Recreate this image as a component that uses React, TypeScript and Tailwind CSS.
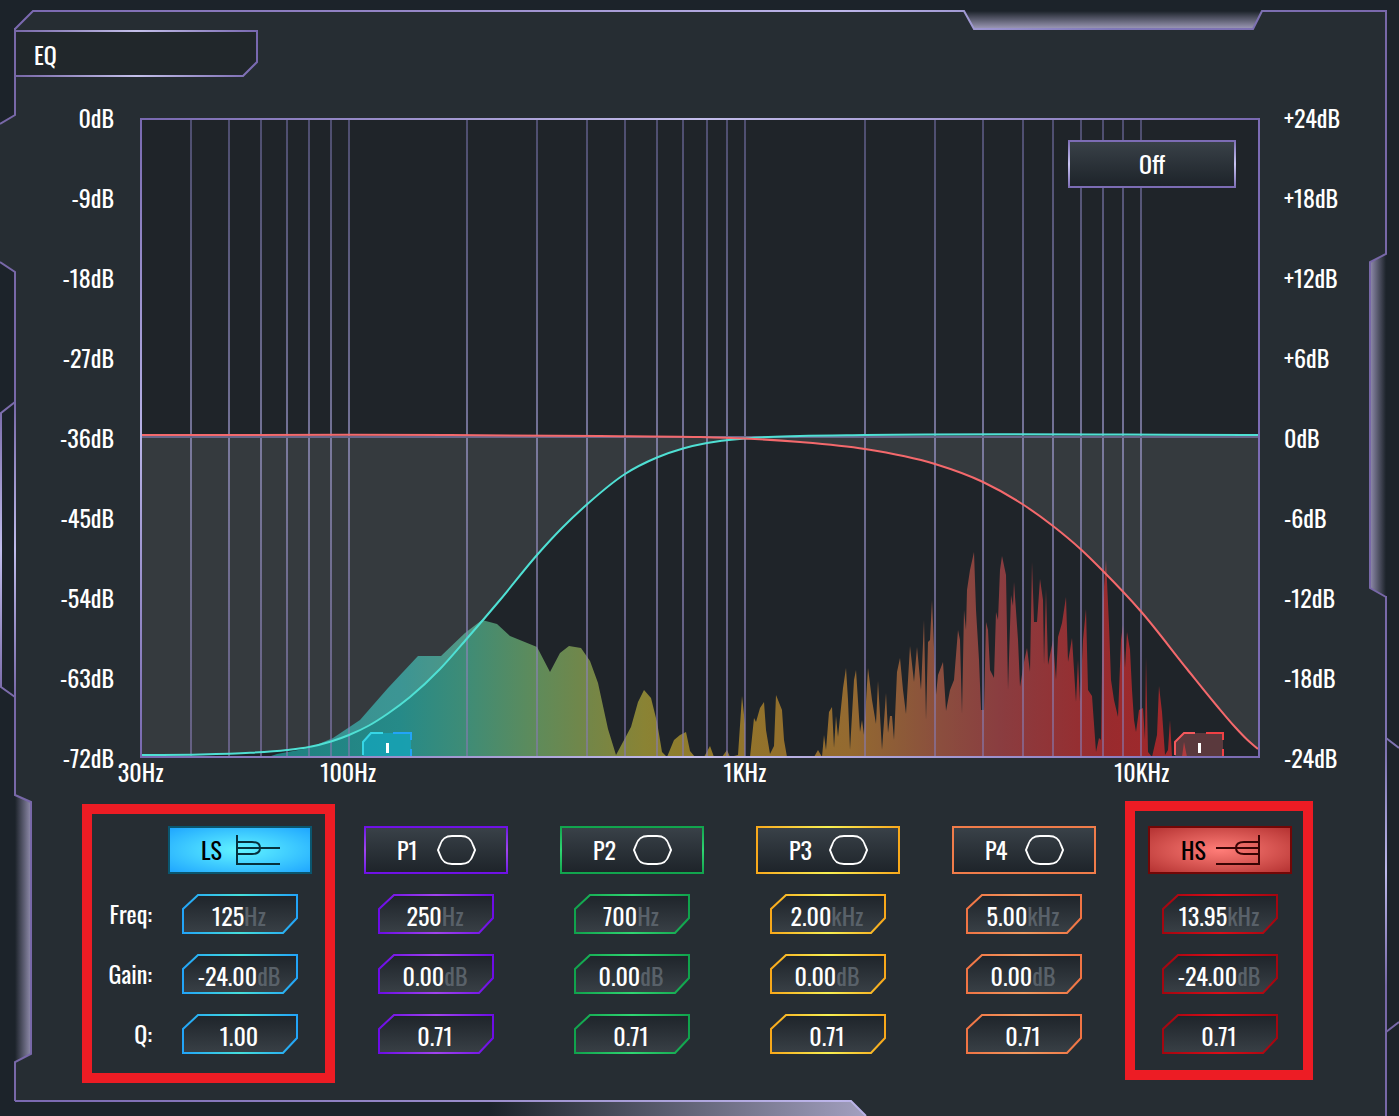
import { useState } from 'react'

type Point = [number, number]

interface Band {
  id: string
  shape: 'low' | 'bell' | 'high'
  freq: string
  unit: string
  gain: string
  q: string
  edge: string
  glow: string
  frame: string
  face: string
}

const IDLE_FACE = 'bg-linear-to-b from-[#394148] to-[#1e242a] text-white'

const BANDS: Band[] = [
  {
    id: 'LS', shape: 'low', freq: '125', unit: 'Hz', gain: '-24.00', q: '1.00',
    edge: '#22a4f8', glow: '#45dfdc',
    frame: 'bg-[#0a566f]',
    face: 'bg-radial from-[#62f4ff] to-[#1fa6ff] text-black',
  },
  {
    id: 'P1', shape: 'bell', freq: '250', unit: 'Hz', gain: '0.00', q: '0.71',
    edge: '#6d0ce6', glow: '#a044ee',
    frame: 'bg-linear-to-b from-[#6d0ce6] via-[#a044ee] to-[#6d0ce6]',
    face: IDLE_FACE,
  },
  {
    id: 'P2', shape: 'bell', freq: '700', unit: 'Hz', gain: '0.00', q: '0.71',
    edge: '#10a24c', glow: '#2fd672',
    frame: 'bg-linear-to-b from-[#10a24c] via-[#2fd672] to-[#10a24c]',
    face: IDLE_FACE,
  },
  {
    id: 'P3', shape: 'bell', freq: '2.00', unit: 'kHz', gain: '0.00', q: '0.71',
    edge: '#f8a81a', glow: '#f8f052',
    frame: 'bg-linear-to-r from-[#f8a81a] via-[#f8f052] to-[#f8a81a]',
    face: IDLE_FACE,
  },
  {
    id: 'P4', shape: 'bell', freq: '5.00', unit: 'kHz', gain: '0.00', q: '0.71',
    edge: '#f07444', glow: '#f39a60',
    frame: 'bg-[#f07c4a]',
    face: IDLE_FACE,
  },
  {
    id: 'HS', shape: 'high', freq: '13.95', unit: 'kHz', gain: '-24.00', q: '0.71',
    edge: '#a30610', glow: '#dc0c18',
    frame: 'bg-[#720606]',
    face: 'bg-radial from-[#ff7d78] to-[#b53232] text-black',
  },
]

const LEFT_SCALE = ['0dB', '-9dB', '-18dB', '-27dB', '-36dB', '-45dB', '-54dB', '-63dB', '-72dB']
const RIGHT_SCALE = ['+24dB', '+18dB', '+12dB', '+6dB', '0dB', '-6dB', '-12dB', '-18dB', '-24dB']

const FREQ_LABELS = [
  { hz: 30, text: '30Hz' },
  { hz: 100, text: '100Hz' },
  { hz: 1000, text: '1KHz' },
  { hz: 10000, text: '10KHz' },
]

const GRID_HZ = [
  40, 50, 60, 70, 80, 90, 100,
  200, 300, 400, 500, 600, 700, 800, 900, 1000,
  2000, 3000, 4000, 5000, 6000, 7000, 8000, 9000, 10000,
]

const PLOT = { x: 140, y: 118, w: 1120, h: 640 }
const DECADE = 396.8

const hzToX = (hz: number) => PLOT.x + 0.7 + DECADE * Math.log10(hz / 30)

const LOW_SHELF: Point[] = [
  [142, 755], [200, 754.5], [250, 752.8], [287, 750], [309, 747], [331, 741.5], [349, 735],
  [369, 725.5], [388, 713.5], [410, 697], [440, 669], [467, 638.5], [500, 600], [537, 555],
  [562, 528], [588, 503.5], [625, 474], [657, 457.5], [683, 448.5], [707, 443], [745, 438.5],
  [800, 436], [865, 435], [1258, 435],
]

const HIGH_SHELF: Point[] = [
  [142, 435], [450, 435], [600, 436], [700, 437], [745, 438.5], [800, 442], [865, 449],
  [935, 464], [983, 482], [1023, 504.5], [1053, 526], [1081, 549.5], [1103, 571], [1141, 611.5],
  [1187, 669], [1217, 706], [1235, 727], [1247, 739.5], [1258, 749],
]

const SPECTRUM: Point[] = [
  [268, 757], [277, 754], [309, 748], [333, 738], [360, 720], [388, 688], [418, 656], [441, 656],
  [465, 633], [482, 620], [497, 624], [510, 636], [537, 647], [550, 672], [560, 653], [569, 646],
  [581, 648], [590, 661], [598, 683], [608, 729], [616, 755], [631, 727], [638, 702], [644, 690],
  [651, 698], [657, 722], [662, 752], [667, 757], [674, 740], [680, 735], [686, 732], [690, 751],
  [695, 757], [704, 757], [710, 746], [714, 757], [722, 757], [727, 750], [730, 757], [738, 755],
  [742, 696], [745, 724], [745, 757], [750, 757], [754, 718], [756, 722], [760, 708], [764, 702],
  [766, 730], [770, 754], [774, 746], [776, 695], [782, 710], [784, 740], [787, 757], [814, 757],
  [818, 750], [822, 757], [824, 735], [826, 750], [829, 712], [832, 707], [834, 748], [836, 716],
  [838, 737], [843, 688], [846, 668], [848, 700], [850, 750], [854, 680], [856, 670], [860, 732],
  [862, 720], [864, 735], [868, 668], [872, 700], [876, 724], [878, 681], [882, 750], [886, 693],
  [888, 733], [890, 716], [892, 716], [894, 740], [897, 672], [900, 658], [903, 690], [906, 714],
  [910, 646], [914, 682], [917, 647], [921, 690], [924, 620], [926, 720], [928, 642], [930, 640],
  [932, 600], [936, 695], [938, 675], [943, 662], [946, 711], [950, 690], [954, 680], [958, 630],
  [960, 640], [962, 714], [964, 610], [966, 630], [967, 590], [970, 570], [974, 552], [976, 610],
  [979, 660], [981, 710], [984, 710], [986, 622], [988, 630], [990, 670], [994, 678], [996, 612],
  [998, 620], [1000, 570], [1002, 556], [1006, 575], [1008, 690], [1011, 595], [1013, 606],
  [1014, 582], [1018, 640], [1020, 687], [1024, 662], [1027, 648], [1030, 672], [1032, 562],
  [1034, 622], [1037, 622], [1040, 579], [1043, 600], [1044, 665], [1046, 589], [1048, 665],
  [1053, 640], [1056, 680], [1058, 637], [1062, 623], [1066, 597], [1068, 662], [1072, 638],
  [1076, 702], [1078, 660], [1080, 702], [1083, 640], [1086, 609], [1088, 690], [1092, 696],
  [1096, 752], [1099, 738], [1101, 740], [1103, 600], [1106, 560], [1109, 625], [1111, 680],
  [1114, 700], [1118, 717], [1121, 640], [1123, 625], [1125, 668], [1127, 632], [1130, 650],
  [1132, 690], [1134, 720], [1136, 732], [1139, 710], [1143, 708], [1145, 740], [1146, 657],
  [1148, 752], [1152, 757], [1157, 735], [1159, 686], [1162, 712], [1165, 755], [1168, 750],
  [1170, 720], [1172, 757], [1182, 757], [1184, 742], [1187, 757],
]

const SPECTRUM_STOPS = [
  { x: 268, color: '#1f7f80' },
  { x: 400, color: '#268a88' },
  { x: 467, color: '#3f8c76' },
  { x: 537, color: '#5f8b5a' },
  { x: 588, color: '#738648' },
  { x: 645, color: '#8a8334' },
  { x: 700, color: '#91792a' },
  { x: 780, color: '#93702c' },
  { x: 850, color: '#946a30' },
  { x: 900, color: '#8d5b38' },
  { x: 940, color: '#8b4e3e' },
  { x: 1000, color: '#8a3d40' },
  { x: 1100, color: '#982b2e' },
  { x: 1187, color: '#a3272a' },
]

const slope = (a: Point, b: Point) => (b[1] - a[1]) / (b[0] - a[0])

// cubic segments through every point, slopes weighted for uneven spacing
function smooth(points: Point[]) {
  const slopes = points.map((p, i) => {
    const prev = points[i - 1]
    const next = points[i + 1]
    if (!prev) return slope(p, next)
    if (!next) return slope(prev, p)
    const before = p[0] - prev[0]
    const after = next[0] - p[0]
    return (slope(prev, p) * after + slope(p, next) * before) / (before + after)
  })

  let d = `M${points[0][0]} ${points[0][1]}`
  for (let i = 0; i < points.length - 1; i++) {
    const [x1, y1] = points[i]
    const [x2, y2] = points[i + 1]
    const third = (x2 - x1) / 3
    d += `C${x1 + third} ${y1 + slopes[i] * third} ${x2 - third} ${y2 - slopes[i + 1] * third} ${x2} ${y2}`
  }
  return d
}

function Frame() {
  return (
    <svg
      aria-hidden="true"
      className="absolute inset-0 size-full"
      viewBox="0 0 1399 1116"
      preserveAspectRatio="none"
      fill="none"
    >
      <defs>
        <linearGradient id="frame-top" gradientUnits="userSpaceOnUse" x1="15" y1="0" x2="1386" y2="0">
          <stop offset="0" stopColor="#7a68b0" />
          <stop offset=".3" stopColor="#9688c8" />
          <stop offset=".6" stopColor="#bdb6ea" />
          <stop offset=".8" stopColor="#7f78b8" />
          <stop offset="1" stopColor="#7a68ac" />
        </linearGradient>
        <linearGradient id="frame-left" gradientUnits="userSpaceOnUse" x1="0" y1="402" x2="0" y2="697">
          <stop offset="0" stopColor="#7868a8" />
          <stop offset=".5" stopColor="#c0bcec" />
          <stop offset="1" stopColor="#7868a8" />
        </linearGradient>
        <linearGradient id="frame-right" gradientUnits="userSpaceOnUse" x1="0" y1="596" x2="0" y2="1116">
          <stop offset="0" stopColor="#7868a8" />
          <stop offset=".3" stopColor="#7f74b2" />
          <stop offset=".53" stopColor="#bcb8ea" />
          <stop offset=".75" stopColor="#7868a8" />
          <stop offset="1" stopColor="#7868a8" />
        </linearGradient>
        <linearGradient id="notch-top" x1="0" y1="0" x2="0" y2="1">
          <stop offset="0" stopColor="#a09cba" stopOpacity="0" />
          <stop offset="1" stopColor="#a09cba" />
        </linearGradient>
        <linearGradient id="notch-left" x1="0" y1="0" x2="1" y2="0">
          <stop offset="0" stopColor="#908cac" stopOpacity="0" />
          <stop offset="1" stopColor="#908cac" />
        </linearGradient>
        <linearGradient id="notch-right" x1="1" y1="0" x2="0" y2="0">
          <stop offset="0" stopColor="#908cac" stopOpacity="0" />
          <stop offset="1" stopColor="#908cac" />
        </linearGradient>
        <linearGradient id="notch-bottom" gradientUnits="userSpaceOnUse" x1="490" y1="0" x2="866" y2="0">
          <stop offset="0" stopColor="#a09cba" stopOpacity="0" />
          <stop offset="1" stopColor="#a3a0c0" />
        </linearGradient>
      </defs>
      <path
        fill="#262d33"
        d="M15 29 33 11H964L974 29H1253L1262 11H1386V254L1370 262V588L1386 597V1116H866L851 1101H15V1062L31 1054V802L15 795V272L0 262V124L15 115Z"
      />
      <path fill="url(#notch-top)" d="M964 11 974 29H1253L1262 11Z" />
      <path fill="url(#notch-left)" d="M15 795 31 802V1054L15 1062Z" />
      <path fill="url(#notch-right)" d="M1386 254 1370 262V588L1386 597Z" />
      <path fill="url(#notch-bottom)" d="M490 1101H851L866 1116H490Z" />
      <g strokeWidth="2">
        <path stroke="url(#frame-top)" d="M15 29 33 11H964L974 29H1253L1262 11H1387" />
        <path stroke="#7868a8" d="M15 28V115L0 124M0 262 15 272V402M15 697V795L31 802V1054L15 1062V1101" />
        <path stroke="url(#frame-left)" d="M15 402V697M15 402 1 413V687L15 697" />
        <path stroke="#7868a8" d="M1386 11V254L1370 262V588L1386 597" />
        <path stroke="url(#frame-right)" d="M1386 596V1116M1386 738 1399 748M1399 1022 1386 1032" />
        <path stroke="url(#frame-top)" d="M15 1101H851L866 1116" />
      </g>
    </svg>
  )
}

function Title() {
  return (
    <header className="relative ml-[15px] flex h-12 w-[243px] items-center pl-[19px]">
      <svg aria-hidden="true" className="absolute inset-0 size-full" viewBox="0 0 243 48" fill="none">
        <defs>
          <linearGradient id="title-edge" x1="0" y1="0" x2="1" y2="0">
            <stop offset="0" stopColor="#7868a8" />
            <stop offset=".5" stopColor="#c4c0ea" />
            <stop offset="1" stopColor="#7868b0" />
          </linearGradient>
        </defs>
        <path d="M1 1H242V32L228 46H1" fill="#21272b" stroke="url(#title-edge)" strokeWidth="2" />
      </svg>
      <h1 className="relative text-2xl leading-7">EQ</h1>
    </header>
  )
}

function Scale({ labels, className }: { labels: string[]; className: string }) {
  return (
    <ul className={`-my-3.5 flex flex-col justify-between ${className}`}>
      {labels.map((label) => (
        <li key={label} className="h-7 leading-[26px]">{label}</li>
      ))}
    </ul>
  )
}

function Plot() {
  const low = smooth(LOW_SHELF)
  const high = smooth(HIGH_SHELF)
  const spectrum = SPECTRUM.map(([x, y]) => `${x} ${y}`).join('L')
  const span = 1187 - 268

  return (
    <svg
      role="img"
      aria-label="Frequency response"
      className="block size-full"
      viewBox={`${PLOT.x} ${PLOT.y} ${PLOT.w} ${PLOT.h}`}
      preserveAspectRatio="none"
      fill="none"
    >
      <defs>
        <linearGradient id="spectrum" gradientUnits="userSpaceOnUse" x1="268" y1="0" x2="1187" y2="0">
          {SPECTRUM_STOPS.map((s) => (
            <stop key={s.x} offset={(s.x - 268) / span} stopColor={s.color} />
          ))}
        </linearGradient>
        <linearGradient id="grid" gradientUnits="userSpaceOnUse" x1="0" y1="118" x2="0" y2="758">
          <stop offset="0" stopColor="#7470a8" stopOpacity=".55" />
          <stop offset=".5" stopColor="#a09cd0" stopOpacity=".65" />
          <stop offset="1" stopColor="#8478b0" stopOpacity=".6" />
        </linearGradient>
        <linearGradient id="plot-h" gradientUnits="userSpaceOnUse" x1="140" y1="0" x2="1260" y2="0">
          <stop offset="0" stopColor="#7868b0" />
          <stop offset=".5" stopColor="#c4beec" />
          <stop offset="1" stopColor="#7868b0" />
        </linearGradient>
        <linearGradient id="plot-left" gradientUnits="userSpaceOnUse" x1="0" y1="118" x2="0" y2="758">
          <stop offset="0" stopColor="#7868b0" />
          <stop offset=".5" stopColor="#b8b2e6" />
          <stop offset="1" stopColor="#7868b0" />
        </linearGradient>
      </defs>
      <path fill="#1f2429" d="M140 118H1260V758H140Z" />
      <path fill="url(#spectrum)" d={`M${spectrum}Z`} />
      <path fill="#fff" fillOpacity=".1" d={`${low}V437H142Z`} />
      <path fill="#fff" fillOpacity=".1" d={`${high}V437H142Z`} />
      <g stroke="url(#grid)" strokeWidth="2">
        {GRID_HZ.map((hz) => {
          const x = 2 * Math.floor(hzToX(hz) / 2) + 1
          return <path key={hz} d={`M${x} 119L${x + 0.01} 757`} />
        })}
      </g>
      <path stroke="#68668a" strokeWidth="2" d="M142 437H1258" />
      <path stroke="#4fe0d4" strokeWidth="2" d={low} />
      <path stroke="#f4696c" strokeWidth="2" d={high} />

      <path fill="#12a8c0" fillOpacity=".7" d="M363 757V742L371 733H411V757Z" />
      <path stroke="#36d6e6" strokeWidth="2" d="M363 755V742L371 733H383" />
      <path stroke="#22a4f8" strokeWidth="2" d="M393 733H411V740M411 749V757" />
      <path fill="#fff" d="M386 743H389V753H386Z" />

      <path fill="#c86064" fillOpacity=".35" d="M1175 757V742L1183 733H1223V757Z" />
      <path stroke="#f4585c" strokeWidth="2" d="M1175 755V742L1184 733H1195" />
      <path stroke="#f04044" strokeWidth="2" d="M1206 733H1223V740M1223 749V757" />
      <path fill="#fff" d="M1198 743H1201V753H1198Z" />

      <path stroke="url(#plot-h)" strokeWidth="2" d="M140 119L1260 119.01M140 757L1260 757.01" />
      <path stroke="url(#plot-left)" strokeWidth="2" d="M141 118L141.01 758" />
      <path stroke="#7c6cb4" strokeWidth="2" d="M1259 118V758" />
    </svg>
  )
}

function BandIcon({ shape }: { shape: Band['shape'] }) {
  return (
    <svg aria-hidden="true" className="h-[30px] w-11" viewBox="0 0 44 30" fill="none" strokeWidth="2">
      {shape === 'bell' ? (
        <path
          stroke="currentColor"
          d="M6 15 8 10C10 4 13 1 20 1H29C36 1 39 4 41 10L43 15 41 20C39 26 36 29 29 29H20C13 29 10 26 8 20Z"
        />
      ) : (
        <g stroke={shape === 'low' ? '#06303c' : '#380404'} transform={shape === 'high' ? 'matrix(-1 0 0 1 44 0)' : undefined}>
          <path d="M1 0V29H44M1 7H16C21 7 24 9 24 13S21 19 16 19H1M1 13H44" />
        </g>
      )}
    </svg>
  )
}

interface ValueFieldProps {
  id: string
  label: string
  value: string
  unit?: string
  band: Band
}

function ValueField({ id, label, value, unit, band }: ValueFieldProps) {
  const [text, setText] = useState(value)
  const shape = 'M1 39V15L16 1H115V24L101 39Z'

  return (
    <label htmlFor={id} className="relative flex h-10 w-[116px] items-center justify-center pt-0.5 pr-0.5">
      <svg aria-hidden="true" className="absolute inset-0 size-full" viewBox="0 0 116 40">
        <defs>
          <linearGradient id={`${id}-fill`} x1="0" y1="0" x2="0" y2="1">
            <stop offset="0" stopColor="#1e242a" />
            <stop offset="1" stopColor="#394046" />
          </linearGradient>
          <linearGradient id={`${id}-edge`} x1="0" y1="0" x2="1" y2="0">
            <stop offset="0" stopColor={band.edge} />
            <stop offset=".5" stopColor={band.glow} />
            <stop offset="1" stopColor={band.edge} />
          </linearGradient>
        </defs>
        <path d={shape} fill={`url(#${id}-fill)`} stroke={`url(#${id}-edge)`} strokeWidth="2" />
      </svg>
      <input
        id={id}
        aria-label={`${band.id} ${label}`}
        value={text}
        onChange={(e) => setText(e.target.value)}
        className="relative field-sizing-content h-7 leading-7 outline-none"
      />
      {unit && <span className="relative h-7 leading-7 text-[#596169]">{unit}</span>}
    </label>
  )
}

function BandColumn({ band }: { band: Band }) {
  const [active, setActive] = useState(band.shape !== 'bell')

  return (
    <section className="flex w-36 flex-col items-center gap-5">
      <button
        type="button"
        aria-pressed={active}
        onClick={() => setActive(!active)}
        className={`h-12 w-full p-0.5 ${band.frame}`}
      >
        <span className={`flex size-full items-center pl-[31px] ${band.face}`}>
          <span className="h-7 w-[35px] text-left leading-[26px]">{band.id}</span>
          <BandIcon shape={band.shape} />
        </span>
      </button>
      <ValueField id={`${band.id}-freq`} label="Freq" value={band.freq} unit={band.unit} band={band} />
      <ValueField id={`${band.id}-gain`} label="Gain" value={band.gain} unit="dB" band={band} />
      <ValueField id={`${band.id}-q`} label="Q" value={band.q} band={band} />
    </section>
  )
}

export default function App() {
  return (
    <main className="relative min-h-screen overflow-hidden bg-[#1c232a] pt-[30px] pb-14 font-['Oswald','Liberation_Sans_Narrow','Roboto',sans-serif] text-2xl text-white">
      <Frame />
      <Title />

      <div className="relative mt-10 flex">
        <Scale labels={LEFT_SCALE} className="w-[140px] pr-[26px] text-right" />
        <div className="min-w-0 flex-1">
          <div className="relative h-[640px]">
            <Plot />
            <button
              type="button"
              className="absolute top-[22px] right-6 h-12 w-[168px] bg-linear-to-b from-[#7c6cb4] via-[#c8c4f0] to-[#7c6cb4] px-0.5"
            >
              <span className="flex size-full items-center justify-center border-y-2 border-[#7c6cb4] bg-linear-to-b from-[#394148] to-[#1e242a]">
                <span className="h-7 leading-[26px]">Off</span>
              </span>
            </button>
          </div>
        </div>
        <Scale labels={RIGHT_SCALE} className="w-[139px] pl-6" />
      </div>

      <div className="relative mr-[139px] ml-[140px] h-7">
        {FREQ_LABELS.map(({ hz, text }) => (
          <span
            key={hz}
            className="absolute -translate-x-1/2 leading-[26px]"
            style={{ left: `${((hzToX(hz) - PLOT.x) / PLOT.w) * 100}%` }}
          >
            {text}
          </span>
        ))}
      </div>

      <div className="relative mt-10 flex gap-4 pr-[107px]">
        <div className="flex w-[152px] flex-col gap-5 pt-[68px] text-right">
          <span className="h-10 leading-[38px]">Freq:</span>
          <span className="h-10 leading-[38px]">Gain:</span>
          <span className="h-10 leading-[38px]">Q:</span>
        </div>
        <div className="flex flex-1 justify-between">
          {BANDS.map((band) => (
            <BandColumn key={band.id} band={band} />
          ))}
        </div>
        <div className="pointer-events-none absolute -top-[22px] left-[82px] h-[279px] w-[253px] border-10 border-[#ed1c24]" />
        <div className="pointer-events-none absolute -top-[25px] right-[86px] h-[279px] w-[188px] border-10 border-[#ed1c24]" />
      </div>
    </main>
  )
}
